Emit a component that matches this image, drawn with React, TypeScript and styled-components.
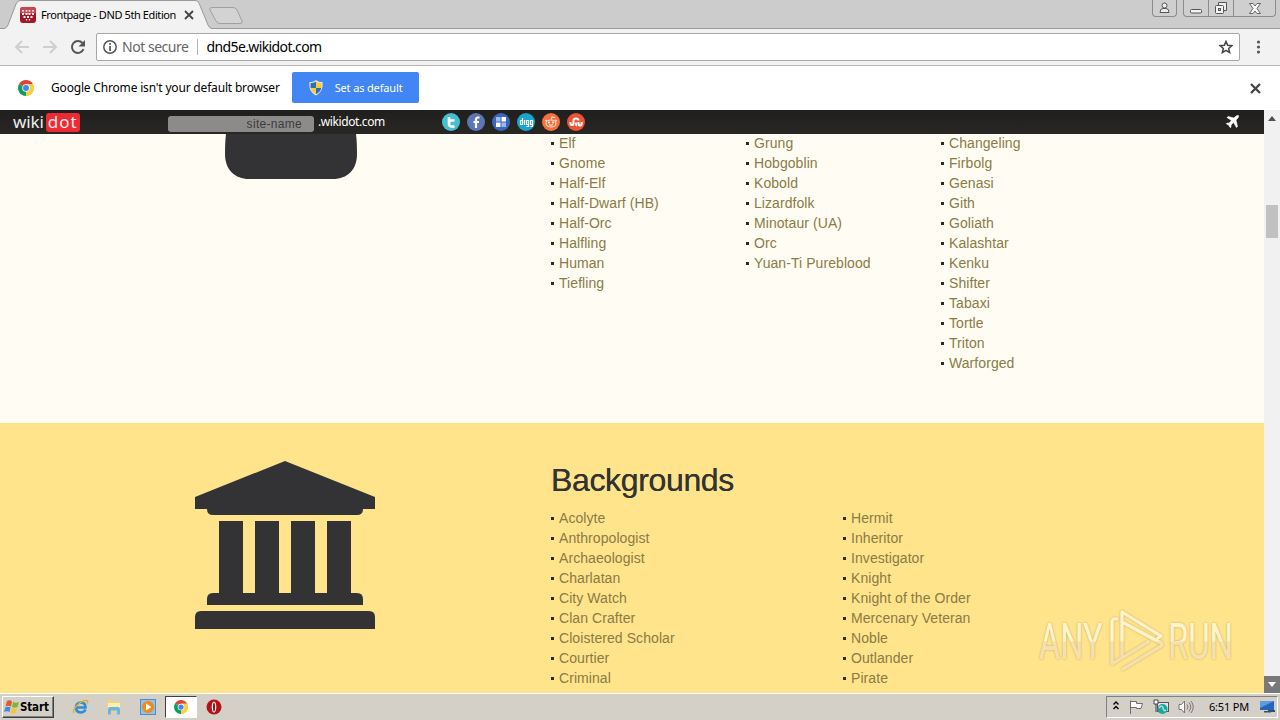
import React from "react";
import styled, { createGlobalStyle } from "styled-components";

const Global = createGlobalStyle`
  * { box-sizing: border-box; }
  body { margin: 0; overflow: hidden; font-family: "Noto Sans", "DejaVu Sans", sans-serif; color: #000; }
  svg { display: block; flex: none; }
`;

const Window = styled.div`
  width: 1280px; height: 720px; display: flex; flex-direction: column; overflow: hidden; background: #fff;
`;
const Label = styled.span<{ $size?: number; $gap?: number; $color?: string; $ml?: number }>`
  font-size: ${p => p.$size ?? 12}px; letter-spacing: ${p => p.$gap ?? 0}px;
  color: ${p => p.$color ?? "#000"}; margin-left: ${p => p.$ml ?? 0}px;
  white-space: nowrap; line-height: 16px;
`;

const TabStrip = styled.header`
  height: 29px; flex: none; display: flex; align-items: flex-start; position: relative;
  background: #ccc; border-bottom: 1px solid #999;
`;
const Tab = styled.div`
  width: 212px; height: 29px; position: relative; display: flex; align-items: center; padding-left: 20px;
`;
const TabShape = styled.svg` position: absolute; left: 0; top: 0; `;
const TabBody = styled.div` position: relative; display: flex; align-items: center; width: 174px; height: 28px; `;
const WindowButtons = styled.div` margin-left: auto; display: flex; padding-right: 4px; gap: 6px; `;
const ButtonGroup = styled.div`
  display: flex; height: 17px; border: 1px solid #8c8c8c; border-top: 0; border-radius: 0 0 4px 4px; background: #cfcfcf;
`;
const WinButton = styled.div<{ $w: number }>`
  width: ${p => p.$w}px; display: flex; justify-content: center; align-items: center;
  & + & { border-left: 1px solid #8c8c8c; }
`;

const Toolbar = styled.div`
  height: 37px; flex: none; display: flex; align-items: center; background: #f2f2f2; border-bottom: 1px solid #b4b4b4; padding: 0 14px;
`;
const NavIcons = styled.div` display: flex; gap: 12px; width: 82px; `;
const AddressBar = styled.div`
  width: 1144px; height: 28px; display: flex; align-items: center; background: #fff;
  border: 1px solid #a8a8a8; border-radius: 2px; padding: 0 6px;
`;
const Divider = styled.div` width: 1px; height: 16px; background: #b5b5b5; margin: 0 8px 0 9px; `;
const Spacer = styled.div` flex: 1; `;

const InfoBar = styled.div`
  height: 44px; flex: none; display: flex; align-items: center; background: #fff; padding: 0 19px 0 18px;
`;
const DefaultButton = styled.button`
  width: 127px; height: 31px; border: 0; border-radius: 2px; background: #4285f4; margin: -1px 0 0 12px; padding: 0 0 0 17px;
  display: flex; align-items: center; font-family: inherit;
`;

const Viewport = styled.main` height: 583px; flex: none; display: flex; `;
const Page = styled.div` width: 1264px; position: relative; overflow: hidden; background: #fffdf3; `;
const WikiBar = styled.div`
  height: 24px; background: linear-gradient(#1f1f1e, #292724); display: flex; align-items: center; padding: 0 25px 0 13px;
`;
const Logo = styled.div`
  display: flex; align-items: center; width: 155px; color: #eee; font-size: 17px; line-height: 20px; letter-spacing: -.15px;
`;
const LogoDot = styled.span`
  background: #ee2a33; border-radius: 3px; width: 34px; height: 19px; line-height: 18px; margin-left: 2px;
  text-align: center; letter-spacing: 1px;
`;
const SiteInput = styled.div`
  width: 146px; height: 16px; margin-top: 4px; border-radius: 3px; background: #8c8b8a; padding-right: 12px;
  text-align: right; font: 12px/16px "Liberation Sans", sans-serif; letter-spacing: .3px; color: #3c3c3c;
`;
const Socials = styled.div` display: flex; gap: 7px; `;
const Domain = styled.div` width: 124px; margin-left: 4px; display: flex; `;

const Section = styled.section<{ $height: number; $bg: string }>`
  height: ${p => p.$height}px; background: ${p => p.$bg}; display: flex; padding-left: 195px; overflow: hidden;
`;
const Picture = styled.div<{ $top: number }>` width: 356px; flex: none; padding-top: ${p => p.$top}px; `;
const Columns = styled.div<{ $step: number }>`
  display: grid; grid-template-columns: repeat(3, ${p => p.$step}px); margin-top: -1px;
`;
const Heading = styled.h1`
  font: 400 32px/38px "Liberation Sans", sans-serif; color: #333; margin: 38px 0 10px; letter-spacing: -.35px; text-shadow: 0 0 .5px #333;
`;
const List = styled.ul` list-style: none; margin: 0; padding: 0; `;
const Item = styled.li`
  height: 20px; display: flex; align-items: center; font: 14px/20px "Liberation Sans", sans-serif; letter-spacing: .07px; color: #8b7a46; white-space: nowrap;
  &::before { content: ""; width: 3px; height: 3px; background: #33291f; margin: 1px 5px 0 0; }
`;
const Watermark = styled.svg` position: absolute; left: 1030px; top: 494px; `;

const Scrollbar = styled.div`
  width: 16px; background: #f1f1f1; display: flex; flex-direction: column; align-items: center;
`;
const ScrollButton = styled.div<{ $dark?: boolean }>`
  width: 16px; height: 17px; display: flex; align-items: center; justify-content: center; background: ${p => (p.$dark ? "#787878" : "#f1f1f1")};
`;
const Thumb = styled.div` width: 12px; height: 33px; background: #c1c1c1; margin: 78px 0 auto; `;

const Taskbar = styled.footer`
  height: 27px; flex: none; display: flex; align-items: center; background: #d4d0c8; border-top: 1px solid #fff; padding: 1px 2px 2px;
`;
const StartButton = styled.div`
  width: 52px; height: 22px; border: 1px solid; border-color: #fff #404040 #404040 #fff; box-shadow: inset -1px -1px #808080;
  display: flex; align-items: center; padding-left: 1px; font: 700 11.5px/16px "DejaVu Sans Condensed", "DejaVu Sans", sans-serif; gap: 0; letter-spacing: -.15px;
`;
const QuickLaunch = styled.div` display: flex; align-items: center; margin-left: 9px; `;
const TaskItem = styled.div<{ $active?: boolean }>`
  width: ${p => (p.$active ? 32 : 34)}px; height: 22px; display: flex; align-items: center; justify-content: center;
  border: 1px solid; border-color: ${p => (p.$active ? "#404040 #fff #fff #404040" : "transparent")};
  background: ${p => (p.$active ? "#fff" : "transparent")};
`;
const Tray = styled.div`
  margin-left: auto; width: 172px; height: 22px; border: 1px solid; border-color: #808080 #fff #fff #808080;
  display: flex; align-items: center; padding-left: 6px;
`;
const TrayIcons = styled.div` display: flex; align-items: center; gap: 8px; margin-left: 9px; `;

const ChromeIcon = ({ size = 16 }: { size?: number }) => (
  <svg width={size} height={size} viewBox="0 0 16 16">
    <path d="M8 8 1.1 4A8 8 0 0 1 14.9 4z" fill="#db4437" />
    <path d="M8 8 14.9 4A8 8 0 0 1 8 16z" fill="#ffcd40" />
    <path d="M8 8 8 16A8 8 0 0 1 1.1 4z" fill="#0f9d58" />
    <path d="M8 4h6.9A8 8 0 0 1 8 16l3.5-6z" fill="#ffcd40" />
    <circle cx="8" cy="8" r="3.8" fill="#fff" /><circle cx="8" cy="8" r="3" fill="#4285f4" />
  </svg>
);
const CloseIcon = ({ s = 8, w = 2 }: { s?: number; w?: number }) => (
  <svg width={s + 2} height={s + 2} viewBox={`-1 -1 ${s + 2} ${s + 2}`}><path d={`M0 0 ${s} ${s}M${s} 0 0 ${s}`} stroke="#444" strokeWidth={w} /></svg>
);
const Favicon = () => (
  <svg width="16" height="16" viewBox="0 0 16 16">
    <rect width="16" height="16" rx="3" fill="#a51525" /><rect width="16" height="7" rx="3" fill="#c74650" />
    <g fill="#fff">
      {[3, 6.5, 9.5, 13].map(x => <rect key={x} x={x - .8} y="3" width="1.600" height="1.600" />)}
      {[3, 6.5, 9.5, 13].map(x => <rect key={x} x={x - 1} y="6" width="2" height="2" />)}
      {[4.5, 8, 11.5].map(x => <rect key={x} x={x - 1} y="9" width="2" height="2" />)}
      {[6.5, 9.5].map(x => <rect key={x} x={x - .7} y="12" width="1.400" height="1.400" />)}
    </g>
  </svg>
);
const Shield = () => (
  <svg width="14" height="16" viewBox="0 0 14 16">
    <path d="M7 0C5 1.7 3 2 .5 2c-.5 6 .5 10 6.500 13.500C13 12 14 8 13.500 2 11 2 9 1.700 7 0z" fill="#ece6d0" />
    <path d="M7 1.500V8H1.700Q1.300 5.500 1.700 3 5 3 7 1.500z" fill="#2f6fb5" /><path d="M7 1.500V8h5.300q.4-2.500 0-5Q9 3 7 1.500z" fill="#f6cb3c" />
    <path d="M7 8v6.300Q2.500 12 1.700 8z" fill="#f6cb3c" /><path d="M7 8v6.300Q11.500 12 12.300 8z" fill="#2f6fb5" />
  </svg>
);

const socialIcons: { bg: string; art: React.ReactNode }[] = [
  { bg: "#46bfd0", art: <path d="M7 4v7q0 2.500 3 2.500h2.500M7 7.500h5.500" stroke="#fff" strokeWidth="2.600" fill="none" /> },
  { bg: "#5b76b5", art: <path d="M12.500 4.500H11q-2 0-2 2V15M6.500 9H12" stroke="#fff" strokeWidth="2.200" fill="none" /> },
  { bg: "#3a66bd", art: <><path d="M9.500 4H14v4.500H9.500zM4 9.500h4.500V14H4z" fill="#fff" /><path d="M4 4h4.500v4.500H4zM9.500 9.500H14V14H9.500z" fill="#9db9ee" /></> },
  { bg: "#19a6cc", art: <path d="M5.500 5v6.500H3.500V7.500h2M7.500 7v5M9.500 7.500h2v4h-2zM11.500 11v2.500h-2M13.500 7.500h2v4h-2zM15.500 11v2.500h-2" stroke="#fff" strokeWidth="1.200" fill="none" /> },
  { bg: "#f4713f", art: <><ellipse cx="9" cy="10.500" rx="5" ry="3.500" stroke="#ffd9c6" strokeWidth="1.200" fill="none" /><path d="M9 7l1-3 3 .7M3 8l2-1M15 8l-2-1M7 11.500q2 1.500 4 0" stroke="#ffd9c6" strokeWidth="1.200" fill="none" /><circle cx="7" cy="9.500" r="1" fill="#fff" /><circle cx="11" cy="9.500" r="1" fill="#fff" /></> },
  { bg: "#ee5434", art: <path d="M3.500 9v1.500q0 1.500 1.500 1.500t1.500-1.500v-3Q6.500 5.500 9 5.500t2.500 2M9 9.500V11q0 1.500 1 1.500M11.500 9v2q0 1.500 1.500 1.500t1.700-1.500V9" stroke="#fff" strokeWidth="2" fill="none" /> },
];

const races = [
  ["Elf", "Gnome", "Half-Elf", "Half-Dwarf (HB)", "Half-Orc", "Halfling", "Human", "Tiefling"],
  ["Grung", "Hobgoblin", "Kobold", "Lizardfolk", "Minotaur (UA)", "Orc", "Yuan-Ti Pureblood"],
  ["Changeling", "Firbolg", "Genasi", "Gith", "Goliath", "Kalashtar", "Kenku", "Shifter", "Tabaxi", "Tortle", "Triton", "Warforged"],
];
const backgrounds = [
  ["Acolyte", "Anthropologist", "Archaeologist", "Charlatan", "City Watch", "Clan Crafter", "Cloistered Scholar", "Courtier", "Criminal"],
  ["Hermit", "Inheritor", "Investigator", "Knight", "Knight of the Order", "Mercenary Veteran", "Noble", "Outlander", "Pirate"],
];
const Lists = ({ data, step }: { data: string[][]; step: number }) => (
  <Columns $step={step}>
    {data.map((col, i) => <List key={i}>{col.map(t => <Item key={t}>{t}</Item>)}</List>)}
  </Columns>
);

export default function App() {
  return (
    <Window>
      <Global />
      <TabStrip>
        <Tab>
          <TabShape width="246" height="29" viewBox="0 0 246 29">
            <path d="M0 29V28.500H4Q7 28 8 25L16 4Q17.500.500 20 .500H195Q198 .500 199 3L208 25Q209.500 28.500 212 28.500V29z" fill="#f2f2f2" />
            <path d="M0 28.500H4Q7 28 8 25L16 4Q17.500.500 20 .500H195Q198 .500 199 3L208 25Q209.500 28.500 212 28.500" fill="none" stroke="#999" />
            <path d="M212 7.500H233Q236 7.500 237 10L242 21Q243 23.500 240 23.500H220Q217 23.500 216 21L210 10Q209 7.500 212 7.500z" fill="#d3d3d3" stroke="#a0a0a0" />
          </TabShape>
          <TabBody>
            <Favicon /><Label $size={11} $gap={-0.4} $ml={5}>Frontpage - DND 5th Edition</Label>
            <Spacer /><CloseIcon s={8} w={1.8} />
          </TabBody>
        </Tab>
        <WindowButtons>
          <ButtonGroup>
            <WinButton $w={23}><svg width="11" height="12" viewBox="0 0 11 12"><circle cx="5.500" cy="3.500" r="2.500" fill="#eee" stroke="#555" /><path d="M1 10.500Q1 6.500 4 6.500h3q3 0 3 4z" fill="#eee" stroke="#555" /></svg></WinButton>
          </ButtonGroup>
          <ButtonGroup>
            <WinButton $w={24}><svg width="12" height="12" viewBox="0 0 12 12"><rect x=".5" y="7.500" width="11" height="3.500" rx="1" fill="#f4f4f4" stroke="#555" /></svg></WinButton>
            <WinButton $w={25}><svg width="14" height="13" viewBox="0 0 14 13"><path d="M4.500 3V.500h8v8H10" fill="#eee" stroke="#555" /><rect x="1.500" y="3.500" width="8" height="8" rx="1" fill="#f4f4f4" stroke="#555" /><rect x="4.500" y="6.500" width="2" height="2" fill="#ccc" stroke="#555" /></svg></WinButton>
            <WinButton $w={42}><svg width="12" height="11" viewBox="0 0 12 11"><path d="M.5.500H4L6 3 8 .500h3.500L8 5.500l3.500 5H8L6 8l-2 2.500H.5L4 5.500z" fill="#f6f6f6" stroke="#666" /></svg></WinButton>
          </ButtonGroup>
        </WindowButtons>
      </TabStrip>
      <Toolbar>
        <NavIcons>
          <svg width="16" height="16" viewBox="0 0 16 16"><path d="M15 8H2.500M8 2 2 8l6 6" stroke="#cfcfcf" strokeWidth="2" fill="none" /></svg>
          <svg width="16" height="16" viewBox="0 0 16 16"><path d="M1 8h12.500M8 2l6 6-6 6" stroke="#cfcfcf" strokeWidth="2" fill="none" /></svg>
          <svg width="16" height="16" viewBox="0 0 16 16"><path d="M13.500 10.200A6 6 0 1 1 12.500 4" stroke="#555" strokeWidth="2" fill="none" /><path d="M15 1v6.500H8.500z" fill="#555" /></svg>
        </NavIcons>
        <AddressBar>
          <svg width="14" height="14" viewBox="0 0 14 14"><circle cx="7" cy="7" r="6.200" fill="none" stroke="#555" strokeWidth="1.500" /><path d="M6.200 6h1.700v5H6.200zM6.200 3h1.700v1.700H6.200z" fill="#555" /></svg>
          <Label $size={14} $gap={-0.47} $color="#666" $ml={5}>Not secure</Label>
          <Divider />
          <Label $size={14} $gap={-0.61}>dnd5e.wikidot.com</Label>
          <Spacer />
          <svg width="14" height="14" viewBox="0 0 24 24"><path d="M12 2.500l2.800 6.700 7.200.6-5.500 4.700 1.700 7-6.200-3.700-6.200 3.700 1.700-7L2 9.800l7.200-.6z" fill="none" stroke="#444" strokeWidth="2.600" /></svg>
        </AddressBar>
        <Spacer />
        <svg width="13" height="14" viewBox="0 0 13 14" fill="#555"><circle cx="5.500" cy="2" r="1.600" /><circle cx="5.500" cy="7" r="1.600" /><circle cx="5.500" cy="12" r="1.600" /></svg>
      </Toolbar>
      <InfoBar>
        <ChromeIcon />
        <Label $size={12} $gap={-0.18} $ml={17}>Google Chrome isn't your default browser</Label>
        <DefaultButton><Shield /><Label $size={11} $gap={-0.15} $color="#fff" $ml={12}>Set as default</Label></DefaultButton>
        <Spacer />
        <CloseIcon s={9} w={2.3} />
      </InfoBar>
      <Viewport>
        <Page>
          <WikiBar>
            <Logo>wiki<LogoDot>dot</LogoDot></Logo>
            <SiteInput>site-name</SiteInput>
            <Domain><Label $size={12} $gap={-0.4} $color="#fff">.wikidot.com</Label></Domain>
            <Socials>
              {socialIcons.map((s, i) => <svg key={i} width="18" height="18" viewBox="0 0 18 18"><circle cx="9" cy="9" r="9" fill={s.bg} />{s.art}</svg>)}
            </Socials>
            <Spacer />
            <svg width="13" height="14" viewBox="0 0 13 14"><path d="M12.500.500q-1.500-.5-3 1L8 3 2 1.500 1 2.500l4.500 3L3 8.200 1 8 .3 8.700l2.500 1.500 1.500 2.500.700-.7L5 10l2.500-2.500 3 5 1-1L10 5l1.500-1.500q1.500-1.500 1-3z" fill="#fff" stroke="#fff" strokeWidth=".6" /></svg>
          </WikiBar>
          <Section $height={289} $bg="#fffdf3">
            <Picture $top={0}><svg width="180" height="46" viewBox="0 0 180 46"><path d="M31 0H161Q162 8 162 20C162 36 152 45 138 45H54C40 45 30 36 30 20Q30 8 31 0z" fill="#333335" /></svg></Picture>
            <Lists data={races} step={195} />
          </Section>
          <Section $height={270} $bg="#ffe48b">
            <Picture $top={38}>
              <svg width="180" height="168" viewBox="0 0 180 168" fill="#333335">
                <path d="M90 0 180 36V48H168Q168 54 162 54H18Q12 54 12 48H0V36z" />
                <path d="M24 60h24v72h12V60h24v72h12V60h24v72h12V60h24v72h6q6 0 6 6v6H12v-6q0-6 6-6h6zM6 150h168q6 0 6 6v12H0v-12q0-6 6-6z" />
              </svg>
            </Picture>
            <div><Heading>Backgrounds</Heading><Lists data={backgrounds} step={292} /></div>
          </Section>
          <Watermark width="220" height="76" viewBox="0 0 220 76">
            <defs>
              <linearGradient id="fade" x1="0" y1="0" x2="0" y2="76" gradientUnits="userSpaceOnUse"><stop offset=".48" stopColor="#fff6cf" stopOpacity=".95" /><stop offset=".5" stopColor="#f6e2b0" stopOpacity=".95" /></linearGradient>
              <linearGradient id="textFade" x1="0" y1="-55" x2="0" y2="21" gradientUnits="userSpaceOnUse"><stop offset=".48" stopColor="#fff6cf" stopOpacity=".95" /><stop offset=".5" stopColor="#f6e2b0" stopOpacity=".95" /></linearGradient>
              <filter id="edge" filterUnits="userSpaceOnUse" x="0" y="0" width="220" height="76"><feDropShadow dx="0" dy="0" stdDeviation="1.300" floodColor="#a98a50" floodOpacity=".7" /></filter>
            </defs>
            <g filter="url(#edge)">
              <g fill="url(#textFade)" fontFamily="Roboto, sans-serif" fontWeight="400" fontSize="50">
                <text transform="translate(9 55) scale(.65 1)">ANY</text>
                <text transform="translate(138 55) scale(.657 1)">RUN</text>
              </g>
              <path d="M128 34 131 32 92 8V52M87 15Q82 14 82 18V60L118 38M93 65 131 42Q133 40 131 39L94 19" fill="none" stroke="url(#fade)" strokeWidth="3.200" strokeLinecap="round" strokeLinejoin="round" />
            </g>
          </Watermark>
        </Page>
        <Scrollbar>
          <ScrollButton><svg width="8" height="5"><path d="M0 5 4 0 8 5z" fill="#505050" /></svg></ScrollButton>
          <Thumb />
          <ScrollButton $dark><svg width="8" height="5"><path d="M0 0H8L4 5z" fill="#fff" /></svg></ScrollButton>
        </Scrollbar>
      </Viewport>
      <Taskbar>
        <StartButton>
          <svg width="16" height="16" viewBox="0 0 16 16"><path d="M3 2Q6 .5 8 2.500L7 7.500Q4 6 1.500 7.500z" fill="#e5582b" /><path d="M9 3q3 1.500 6 0l-1.500 5Q11 9.500 8 8z" fill="#79b933" /><path d="M1.300 8.500Q4 7 6.500 8.500L5.500 13Q3 11.500 0 13z" fill="#3c8ed8" /><path d="M7.500 9q3 1.500 5.500 0l-1.500 5q-2.500 1.500-5 0z" fill="#f7c531" /></svg>
          Start
        </StartButton>
        <QuickLaunch>
          <TaskItem><svg width="17" height="16" viewBox="0 0 17 16"><path d="M13.500 10.500Q12 13.500 8.500 13.500 4 13 4 8.500T8.500 3.500q5 0 5 5H5" fill="none" stroke="#2d8ed6" strokeWidth="2.600" /><path d="M2 14Q0 12 5 6.500T15 1.500q1.500.500 0 3" fill="none" stroke="#e0ae35" strokeWidth="1.400" /></svg></TaskItem>
          <TaskItem><svg width="16" height="16" viewBox="0 0 16 16"><path d="M1 1h5l1 1.500h7V13H1z" fill="#f0d37a" /><path d="M2 4h12v7H2z" fill="#fbeeb2" /><path d="M2 15.500V10q0-2 2-2h8q2 0 2 2v5.500h-3v-4H5v4z" fill="#6fb3df" /></svg></TaskItem>
          <TaskItem><svg width="16" height="16" viewBox="0 0 16 16"><rect x=".5" y=".5" width="15" height="15" fill="#8fc3ea" stroke="#4b8fca" /><circle cx="8" cy="8" r="6" fill="#f08a1c" /><path d="M6 4.500 11.500 8 6 11.500z" fill="#fff" /></svg></TaskItem>
          <TaskItem $active><ChromeIcon size={14} /></TaskItem>
          <TaskItem><svg width="16" height="16" viewBox="0 0 16 16"><circle cx="8" cy="8" r="7.500" fill="#b31217" /><ellipse cx="8" cy="8" rx="2.300" ry="5.500" fill="#fff" /><ellipse cx="8" cy="8" rx="1" ry="4.600" fill="#8b0d10" /></svg></TaskItem>
        </QuickLaunch>
        <Tray>
          <svg width="6" height="14" viewBox="0 0 6 14"><path d="M.5 4.500 3 2l2.500 2.500M.5 9 3 6.500 5.500 9" stroke="#000" strokeWidth="1.400" fill="none" /></svg>
          <TrayIcons>
            <svg width="17" height="16" viewBox="0 0 17 16"><path d="M2.500 15V1.500M2.500 2.500h6v2h6L13 9.500H8.500v-1h-6" stroke="#6d6d6d" fill="#fff" /></svg>
            <svg width="17" height="16" viewBox="0 0 17 16"><rect x="4.500" y="3.500" width="11" height="9" fill="#dfe8ee" stroke="#555" /><path d="M1 1h4v4H1zM3 5v8" stroke="#444" fill="#fff" /><circle cx="9.500" cy="10" r="5" fill="#1fa49b" /><path d="M6 9q3-4 4 0t3 2" stroke="#a9e3de" fill="none" strokeWidth="1.500" /></svg>
            <svg width="17" height="16" viewBox="0 0 17 16"><path d="M1 5.500h2.500L6.500 2v12l-3-3.500H1z" fill="#fff" stroke="#777" /><path d="M9 5.500q2 2.500 0 5M11 3.500q3.500 4.500 0 9M13 2q4.500 6 0 12" stroke="#777" fill="none" /></svg>
          </TrayIcons>
          <Label $size={11} $ml={14} $gap={-0.2}>6:51 PM</Label>
          <Spacer />
          <svg width="18" height="15" viewBox="0 0 18 15"><path d="M1 2h14v9H1z" fill="#2565bb" /><path d="M1 2h14L1 9z" fill="#5d9be0" /><path d="M5 12h7v1.500H5zM9 11h7v2H9z" fill="#34506e" /></svg>
        </Tray>
      </Taskbar>
    </Window>
  );
}
